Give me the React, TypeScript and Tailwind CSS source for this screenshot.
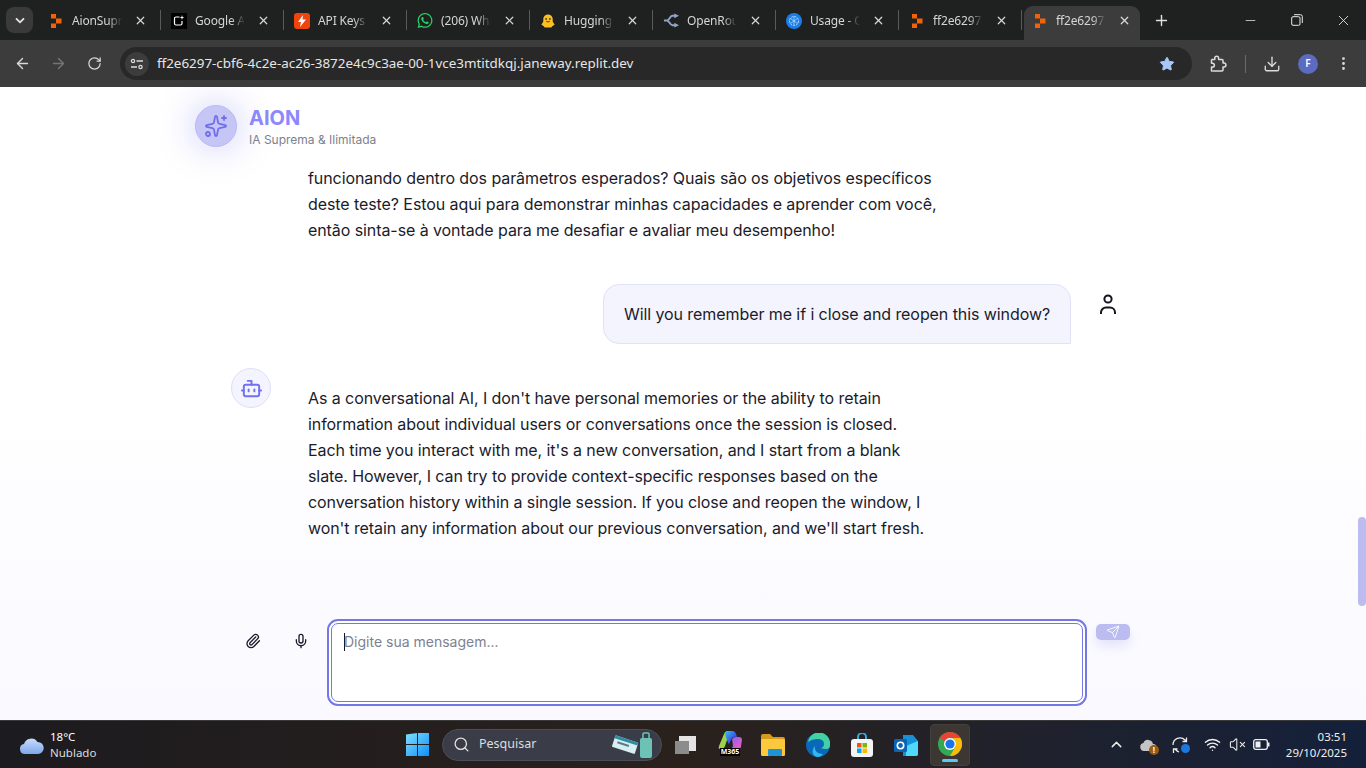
import React from "react";
import { ArrowLeft, ArrowRight, RotateCw, Star, Download, EllipsisVertical, X, Plus, Minus, Sparkles, Bot, Paperclip, Mic, Send, Search, ChevronUp, Wifi, VolumeX } from "lucide-react";
import { FaWhatsapp } from "react-icons/fa";

const ReplitIcon = () => (
  <svg width="12" height="14" viewBox="0 0 12 14"><path fill="#f26207" d="M1 0h5v4.500H1zM6 4.500h5.500v5H6zM1 9.500h5V14H1z" /></svg>
);
const GoogleAI = () => (
  <div className="w-4 h-4 bg-black flex items-center justify-center">
    <svg width="14" height="14" viewBox="0 0 14 14" fill="none"><path d="M7.500 3H4A1.500 1.500 0 0 0 2.500 4.500v5A1.500 1.500 0 0 0 4 11h4.500A1.500 1.500 0 0 0 10 9.500V7" stroke="#fff" strokeWidth="1.200" /><path d="M10 1l.6 1.900 1.900.6-1.900.6L10 6l-.6-1.900-1.900-.6 1.900-.6z" fill="#fff" /></svg>
  </div>
);
const ApiKeys = () => (
  <div className="w-4 h-4 rounded-[3px] bg-[#f0440f] flex items-center justify-center">
    <svg width="10" height="12" viewBox="0 0 10 12"><path d="M6 0L1 7h3l-1 5 6-7.500H5.500z" fill="#fff" /></svg>
  </div>
);
const Hugging = () => (
  <svg width="17" height="17" viewBox="0 0 17 17"><path d="M3.500 7a5 5 0 0 1 10 0v2.500l2 3.500-2.500 1.500-1 1.500H5l-1-1.500L1.500 13l2-3.500z" fill="#fbbf24" /><circle cx="6.500" cy="6.800" r="1" fill="#4b3b1a" /><circle cx="10.500" cy="6.800" r="1" fill="#4b3b1a" /><path d="M6.500 9.300q2 1.800 4 0" stroke="#7a4f12" fill="#7a4f12" /></svg>
);
const OpenRouter = () => (
  <svg width="17" height="15" viewBox="0 0 17 15" fill="none"><path d="M1 7.500h3c3 0 3-5 6-5h3M4 7.500c3 0 3 5 6 5h3" stroke="#93a4c4" strokeWidth="2" /><path d="M12 0l5 2.500-5 2.500zM12 10l5 2.500-5 2.500z" fill="#93a4c4" /></svg>
);
const Usage = () => (
  <svg width="16" height="16" viewBox="0 0 16 16" fill="none"><circle cx="8" cy="8" r="8" fill="#1c7fe8" /><circle cx="8" cy="8" r="4.500" stroke="#bfe0ff" strokeWidth="1" strokeDasharray="2 1" /><path d="M4.500 5.500l7 5M11.500 5.500l-7 5M8 3.500v9" stroke="#bfe0ff" strokeWidth=".7" /></svg>
);

const tabs: { icon: React.ReactNode; title: string; active?: boolean }[] = [
  { icon: <ReplitIcon />, title: "AionSupremaIlimitada" },
  { icon: <GoogleAI />, title: "Google AI Studio" },
  { icon: <ApiKeys />, title: "API Keys - Groq" },
  { icon: <FaWhatsapp size={17} color="#25d366" />, title: "(206) WhatsApp" },
  { icon: <Hugging />, title: "Hugging Face" },
  { icon: <OpenRouter />, title: "OpenRouter" },
  { icon: <Usage />, title: "Usage - OpenAI" },
  { icon: <ReplitIcon />, title: "ff2e6297-cbf6-4c2e" },
  { icon: <ReplitIcon />, title: "ff2e6297-cbf6-4c2e", active: true },
];

function Tab({ icon, title, active, last }: { icon: React.ReactNode; title: string; active?: boolean; last: boolean }) {
  return (
    <div className="w-[123px] h-[34px] flex items-center shrink-0">
      <div className={`w-[116px] h-[34px] flex items-center pl-[8px] pb-[5px] rounded-t-[9px] ${active ? "bg-[#3c3c3c]" : ""}`}>
        <div className="w-[16px] h-[16px] flex items-center justify-center shrink-0">{icon}</div>
        <div className="ml-[8px] w-[50px] overflow-hidden whitespace-nowrap text-[12px] tracking-[-0.15px] text-[#d5d5d5] [mask-image:linear-gradient(to_right,black_72%,transparent)]">{title}</div>
        <X size={13} strokeWidth={2.2} className="ml-[12px] text-[#d8d8d8]" />
      </div>
      {!last && !active && <div className="ml-[4px] mb-[6px] w-px h-[20px] bg-[#5a5a5a]" />}
    </div>
  );
}

function TabStrip() {
  return (
    <div className="h-[40px] bg-[#1f2020] flex items-end shrink-0 [font-family:'Noto_Sans','Open_Sans',sans-serif]">
      <div className="w-[40px] h-[40px] flex items-start pt-[7px] pl-[6px]">
        <div className="w-[27px] h-[26px] rounded-lg bg-[#3a3a3a] flex items-center justify-center">
          <svg width="10" height="7" viewBox="0 0 10 7" fill="none"><path d="M1 1.300l4 4 4-4" stroke="#e8e8e8" strokeWidth="1.800" /></svg>
        </div>
      </div>
      {tabs.map((t, i) => (
        <Tab key={i} icon={t.icon} title={t.title} active={t.active} last={i === tabs.length - 1} />
      ))}
      <div className="h-[40px] flex items-center flex-1">
        <Plus size={17} strokeWidth={2} className="text-[#e0e0e0] ml-[6px]" />
        <div className="flex-1" />
        <Minus size={15} strokeWidth={1.200} className="text-[#e8e8e8] mr-[33px]" />
        <svg width="12" height="12" viewBox="0 0 12 12" fill="none" className="mr-[32px]"><rect x=".7" y="2.700" width="8.300" height="8.600" rx="1.300" stroke="#e8e8e8" /><path d="M3 .7h6.500a1.800 1.800 0 0 1 1.800 1.800V9" stroke="#e8e8e8" /></svg>
        <X size={17} strokeWidth={1.200} className="text-[#f0f0f0] mr-[14px]" />
      </div>
    </div>
  );
}

function Toolbar() {
  return (
    <div className="h-[47px] bg-[#3c3c3c] flex items-center shrink-0 [font-family:'Noto_Sans','Open_Sans',sans-serif]">
      <ArrowLeft size={17} strokeWidth={2} className="ml-[14px] text-[#d8d8d8]" />
      <ArrowRight size={17} strokeWidth={2} className="ml-[19px] text-[#757575]" />
      <RotateCw size={15} strokeWidth={2} className="ml-[20px] text-[#d8d8d8]" />
      <div className="ml-[18px] w-[1072px] h-[33px] rounded-full bg-[#282828] flex items-center">
        <div className="ml-[5px] w-[24px] h-[24px] rounded-full bg-[#3c3c3c] flex items-center justify-center shrink-0">
          <svg width="14" height="12" viewBox="0 0 14 12" fill="none" stroke="#dcdcdc" strokeWidth="1.300"><circle cx="3" cy="3" r="1.600" /><path d="M6.500 3H13M1 9h6" /><circle cx="10.500" cy="9" r="1.600" /></svg>
        </div>
        <span className="ml-[8px] text-[13.400px] text-[#e6e6e6] whitespace-nowrap">ff2e6297-cbf6-4c2e-ac26-3872e4c9c3ae-00-1vce3mtitdkqj.janeway.replit.dev</span>
        <div className="flex-1" />
        <Star size={16} fill="#a8c7fa" strokeWidth={1.500} className="text-[#a8c7fa] mr-[17px]" />
      </div>
      <svg width="17" height="17" viewBox="0 0 17 17" fill="none" stroke="#dcdcdc" strokeWidth="1.500" strokeLinejoin="round" className="ml-[18px]"><path d="M1.500 4.500h3.300V3.200a1.900 1.900 0 0 1 3.800 0v1.300h3.400a1 1 0 0 1 1 1v2.600h1a1.900 1.900 0 0 1 0 3.800h-1V15a1 1 0 0 1-1 1H2.500" /><path d="M1.500 4.500v3.800h1a1.900 1.900 0 0 1 0 3.800h-1V16h1" /></svg>
      <div className="ml-[18px] w-px h-[18px] bg-[#6a6a6a]" />
      <Download size={18} strokeWidth={1.800} className="ml-[17px] text-[#dcdcdc]" />
      <div className="ml-[17px] w-[20px] h-[20px] rounded-full bg-[#5c6bc0] text-white text-[10px] font-semibold flex items-center justify-center">F</div>
      <EllipsisVertical size={17} strokeWidth={2} className="ml-[17px] text-[#dcdcdc]" />
    </div>
  );
}

function ChatPage() {
  return (
    <div className="relative flex-1 min-h-0 flex flex-col overflow-hidden bg-gradient-to-b from-white via-white to-[#f9f9ff] [font-family:Inter,'Liberation_Sans',sans-serif]">
      <header className="h-[78px] shrink-0 pl-[195px] pt-[18px] flex items-start gap-[12px]">
        <div className="w-[42px] h-[42px] rounded-full bg-[#c5c5f6] border border-[#b9b9f2] shadow-[0_0_36px_rgba(129,129,240,0.45)] flex items-center justify-center">
          <Sparkles size={24} strokeWidth={1.800} className="text-[#6f6fee]" />
        </div>
        <div className="flex flex-col">
          <div className="text-[20px] leading-[26px] font-bold text-[#8c87fa]">AION</div>
          <div className="text-[12px] leading-[16px] mt-[1px] text-[#7c7f8e]">IA Suprema &amp; Ilimitada</div>
        </div>
      </header>
      <main className="flex-1 min-h-0 overflow-hidden pl-[231px] text-[16px] leading-[26px] tracking-[-0.08px] text-[#1b1b2a]">
        <p className="pl-[77px] whitespace-nowrap">
          funcionando dentro dos parâmetros esperados? Quais são os objetivos específicos<br />
          deste teste? Estou aqui para demonstrar minhas capacidades e aprender com você,<br />
          então sinta-se à vontade para me desafiar e avaliar meu desempenho!
        </p>
        <div className="mt-[41px] w-[897px] flex justify-end items-start gap-[17px]">
          <div className="h-[60px] px-[20px] flex items-center rounded-2xl rounded-br-none bg-[#f4f4fe] border border-[#e1e1f8] whitespace-nowrap">
            Will you remember me if i close and reopen this window?
          </div>
          <div className="w-[40px] h-[40px] flex items-center justify-center mt-px">
            <svg width="18" height="22" viewBox="0 0 18 22" fill="none" stroke="#15151f" strokeWidth="2"><circle cx="9" cy="5" r="3.600" /><path d="M2 20v-1.500a5 5 0 0 1 5-5h4a5 5 0 0 1 5 5V20" /></svg>
          </div>
        </div>
        <div className="mt-[24px] flex items-start">
          <div className="w-[40px] h-[40px] rounded-full bg-[#f4f4fe] border border-[#dedef8] flex items-center justify-center shrink-0">
            <Bot size={23} strokeWidth={2} className="text-[#7070f0]" />
          </div>
          <p className="ml-[37px] mt-[17px] whitespace-nowrap">
            As a conversational AI, I don't have personal memories or the ability to retain<br />
            information about individual users or conversations once the session is closed.<br />
            Each time you interact with me, it's a new conversation, and I start from a blank<br />
            slate. However, I can try to provide context-specific responses based on the<br />
            conversation history within a single session. If you close and reopen the window, I<br />
            won't retain any information about our previous conversation, and we'll start fresh.
          </p>
        </div>
      </main>
      <div className="h-[101px] shrink-0 pl-[233px] flex items-start">
        <div className="w-[40px] h-[40px] mt-[2px] flex items-center justify-center">
          <Paperclip size={16} strokeWidth={2} className="text-[#1b1b2a]" />
        </div>
        <div className="w-[40px] h-[40px] mt-[2px] ml-[8px] flex items-center justify-center">
          <Mic size={16} strokeWidth={2} className="text-[#1b1b2a]" />
        </div>
        <div className="ml-[6px] w-[760px] h-[87px] rounded-[11px] border-2 border-[#7378e4] p-[2px] bg-white">
          <div className="w-full h-full rounded-[7px] border border-[#7378e4] pl-[12px] pt-[6px] text-[14px] leading-[24px] text-[#7e818f] whitespace-nowrap">
            <span className="inline-block w-px h-[18px] bg-[#15151f] align-[-4px] -mr-px" />Digite sua mensagem...
          </div>
        </div>
        <div className="ml-[9px] mt-[5px] w-[34px] h-[16px] rounded-[5px] bg-[#bcbcf0] shadow-[0_6px_12px_rgba(120,120,230,0.18)] flex items-center justify-center">
          <Send size={14} strokeWidth={1.500} className="text-white" />
        </div>
      </div>
      <div className="absolute right-0 top-[430px] w-[8px] h-[89px] rounded-full bg-[#bcbcf0]" />
    </div>
  );
}

const ChromeLogo = () => (
  <svg width="24" height="24" viewBox="0 0 24 24">
    <circle cx="12" cy="12" r="12" fill="#34a853" />
    <path d="M12 0a12 12 0 0 1 10.400 6H12a6 6 0 0 0-5.200 3L1.600 6A12 12 0 0 1 12 0z" fill="#ea4335" />
    <path d="M22.400 6A12 12 0 0 1 12 24l5.200-9A6 6 0 0 0 12 6z" fill="#fbbc05" />
    <circle cx="12" cy="12" r="6" fill="#fff" />
    <circle cx="12" cy="12" r="4.600" fill="#1a73e8" />
  </svg>
);

function Taskbar() {
  return (
    <div className="h-[48px] shrink-0 border-t border-[#3a3a3a] bg-gradient-to-r from-[#1c1b1f] via-[#2a211c] to-[#14203a] flex items-center relative text-white [font-family:'Noto_Sans','Open_Sans',sans-serif]">
      <div className="w-[406px] flex items-center pl-[19px] shrink-0">
        <svg width="25" height="18" viewBox="0 0 25 18"><defs><linearGradient id="cl" x1="0" y1="0" x2="0" y2="1"><stop offset="0" stopColor="#c6dbfb" /><stop offset="1" stopColor="#7ea7ea" /></linearGradient></defs><path d="M6 18a5 5 0 0 1-1-9.900A7.500 7.500 0 0 1 18.500 6 6 6 0 0 1 19 18z" fill="url(#cl)" /></svg>
        <div className="ml-[6px] flex flex-col text-[11.500px] leading-[16px]">
          <span>18°C</span>
          <span className="text-[#dcdcdc]">Nublado</span>
        </div>
      </div>
      <svg width="23" height="23" viewBox="0 0 23 23" className="shrink-0"><defs><linearGradient id="wn" x1="0" y1="0" x2="1" y2="1"><stop offset="0" stopColor="#7fe0fb" /><stop offset="1" stopColor="#0f8ffb" /></linearGradient></defs><path fill="url(#wn)" d="M0 1.500L11 0v11H0zM12 0h11v11H12zM0 12h11v11H0zM12 12h11v11H12z" /></svg>
      <div className="ml-[13px] w-[220px] h-[32px] rounded-full bg-[#3a3d48] border border-[#4b4e58] flex items-center shrink-0">
        <Search size={17} strokeWidth={1.800} className="ml-[10px] text-[#e4e4e4]" />
        <span className="ml-[9px] text-[12.500px] text-[#dedede]">Pesquisar</span>
        <div className="flex-1" />
        <svg width="42" height="28" viewBox="0 0 42 28" className="mr-[7px]">
          <g transform="rotate(18 14 14)"><rect x="1" y="8" width="24" height="12" rx="1" fill="#d7eef2" /><rect x="1" y="8" width="24" height="3" fill="#2b8ea3" /><rect x="5" y="13" width="12" height="2" fill="#5d7c88" /></g>
          <rect x="28" y="7" width="12" height="20" rx="2" fill="#6cc3b5" /><rect x="31" y="2" width="6" height="6" rx="1" fill="none" stroke="#6cc3b5" strokeWidth="1.500" />
        </svg>
      </div>
      <div className="ml-[12px] w-[24px] h-[24px] flex items-center justify-center shrink-0">
        <svg width="24" height="20" viewBox="0 0 24 20"><rect x="5" y="1" width="17" height="15" fill="#e4e4e4" /><rect x="1" y="6" width="14" height="13" fill="#8c8c8c" /></svg>
      </div>
      <div className="ml-[20px] w-[24px] h-[28px] flex flex-col items-center shrink-0">
        <svg width="24" height="18" viewBox="0 0 24 18"><defs><linearGradient id="m3a" x1="0" y1="0" x2="1" y2="1"><stop offset="0" stopColor="#2ec4f0" /><stop offset=".55" stopColor="#3b5fe8" /><stop offset="1" stopColor="#1f3fc0" /></linearGradient><linearGradient id="m3b" x1="0" y1="0" x2="1" y2="1"><stop offset="0" stopColor="#8f5cf0" /><stop offset="1" stopColor="#ee5fc0" /></linearGradient></defs><path d="M1 15L6 3q1-3 4-3h5q-3 0-4 3L7 15q-1 3-4 3H2q-2 0-1-3z" fill="#9bd24a" /><path d="M7 3q1-3 4-3h3q3 0 4 3l1 3q-3-1-5 1l-3 6-1-1z" fill="url(#m3a)" /><path d="M14 8q1-2 4-2h3q3 0 3 3l-1 6q0 3-3 3h-8q2 0 3-3z" fill="url(#m3b)" /></svg>
        <span className="text-[7px] leading-[8px] font-bold bg-black px-px -mt-[1px]">M365</span>
      </div>
      <div className="ml-[19px] shrink-0">
        <svg width="24" height="22" viewBox="0 0 24 22"><path d="M0 2a2 2 0 0 1 2-2h7l3 3h10a2 2 0 0 1 2 2v3H0z" fill="#d69b18" /><rect y="5" width="24" height="17" rx="1.500" fill="#fcc93d" /><rect x="7" y="15" width="14" height="7" rx="1" fill="#1f93d6" /></svg>
      </div>
      <div className="ml-[21px] shrink-0">
        <svg width="24" height="24" viewBox="0 0 24 24"><circle cx="12" cy="12" r="12" fill="#0b67b8" /><path d="M2 9A11 11 0 0 1 24 12q0 4-4 4-3 0-5-1 3-1 3-4 0-5-7-5-5 0-9 3z" fill="#41d1a5" /><path d="M12 24C6 24 5 17 9 13c-1 5 3 8 8 8-1.500 2-3 3-5 3z" fill="#2fb9ee" /></svg>
      </div>
      <div className="ml-[20px] shrink-0">
        <svg width="24" height="24" viewBox="0 0 24 24" fill="none"><path d="M8 6V4a4 4 0 0 1 8 0v2" stroke="#35a8e0" strokeWidth="2" /><rect x="1" y="6" width="22" height="18" rx="3" fill="#f4f4f4" /><rect x="7" y="10" width="4.500" height="4.500" fill="#f25022" /><rect x="12.500" y="10" width="4.500" height="4.500" fill="#7fba00" /><rect x="7" y="15.500" width="4.500" height="4.500" fill="#00a4ef" /><rect x="12.500" y="15.500" width="4.500" height="4.500" fill="#ffb900" /></svg>
      </div>
      <div className="ml-[20px] shrink-0">
        <svg width="24" height="24" viewBox="0 0 24 24"><path d="M9 2h10l5 6v13a2 2 0 0 1-2 2H9z" fill="#1690d8" /><path d="M12 13l12-5v13a2 2 0 0 1-2 2H12z" fill="#50d9ff" /><rect y="6" width="13" height="13" rx="1.500" fill="#0a64b4" /><circle cx="6.500" cy="12.500" r="3.200" fill="none" stroke="#fff" strokeWidth="1.600" /></svg>
      </div>
      <div className="ml-[12px] w-[40px] h-[42px] rounded bg-[#3c3733] border border-[#46403a] flex flex-col items-center pt-[7px] shrink-0">
        <ChromeLogo />
        <div className="mt-[3px] w-[16px] h-[3px] rounded-full bg-[#5cc8f8]" />
      </div>
      <div className="flex-1" />
      <ChevronUp size={17} strokeWidth={2} className="text-[#ececec] mr-[15px]" />
      <div className="relative mr-[16px] w-[16px] h-[14px]">
        <svg width="16" height="13" viewBox="0 0 16 13"><path d="M4 13a4 4 0 0 1-.6-7.900A5 5 0 0 1 13 6a3.500 3.500 0 0 1 0 7z" fill="#c4c4c4" /></svg>
        <div className="absolute -right-[3px] -bottom-[3px] w-[10px] h-[10px] rounded-full bg-[#9a5a14] text-[8px] leading-[10px] text-center font-bold text-white">!</div>
      </div>
      <div className="relative mr-[15px] w-[17px] h-[18px]">
        <svg width="17" height="18" viewBox="0 0 17 18" fill="none" stroke="#ececec" strokeWidth="1.300"><path d="M1 9a7 7 0 0 1 12-5l1.500 1.500M14.500 1.500v4h-4" /><path d="M3 13l1.500 1.500a6 6 0 0 0 2.500 1.500M1.500 17v-4h4" /></svg>
        <div className="absolute -right-[1px] bottom-[1px] w-[9px] h-[9px] rounded-full bg-[#1a78e0]" />
      </div>
      <Wifi size={17} strokeWidth={2} className="text-[#f0f0f0] mr-[8px]" />
      <VolumeX size={17} strokeWidth={1.500} className="text-[#ececec] mr-[7px]" />
      <svg width="17" height="11" viewBox="0 0 17 11" fill="none" className="mr-[16px]"><rect x=".7" y=".7" width="13.600" height="9.600" rx="2" stroke="#f0f0f0" strokeWidth="1.300" /><rect x="2.500" y="2.500" width="5" height="6" fill="#f0f0f0" /><rect x="15" y="3.500" width="1.500" height="4" fill="#f0f0f0" /></svg>
      <div className="flex flex-col items-end pr-[19px] text-[11.500px] leading-[16px] text-[#f0f0f0]">
        <span>03:51</span>
        <span>29/10/2025</span>
      </div>
    </div>
  );
}

export default function App() {
  return (
    <div className="w-[1366px] h-[768px] flex flex-col overflow-hidden">
      <TabStrip />
      <Toolbar />
      <ChatPage />
      <Taskbar />
    </div>
  );
}
